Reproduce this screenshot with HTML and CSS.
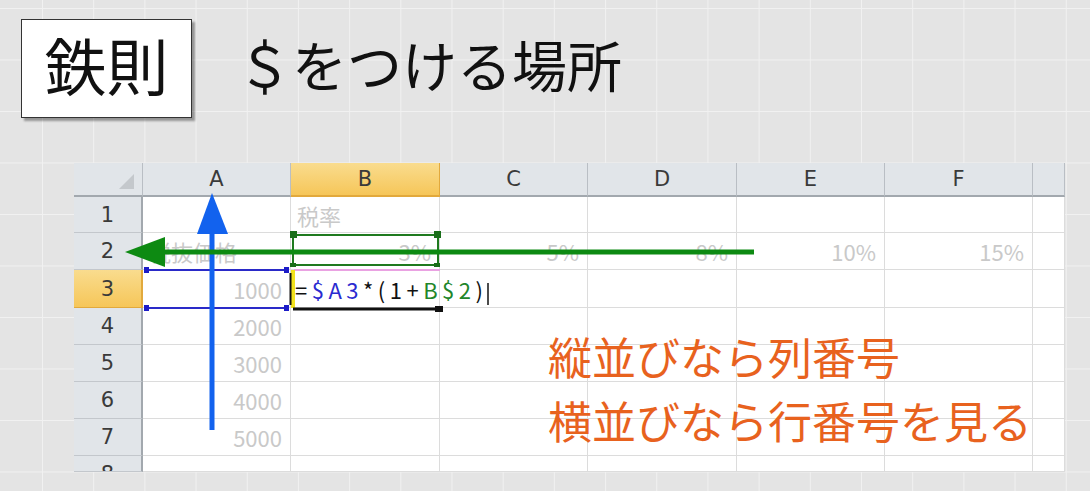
FILE: index.html
```html
<!DOCTYPE html>
<html lang="ja">
  <head>
    <meta charset="UTF-8" />
    <title>鉄則 ＄をつける場所</title>
    <link rel="stylesheet" href="styles.css">
  </head>
  <body>
    <div class="slide">
      <div class="slide-head">
        <div class="rule-box">鉄則</div>
        <h1 class="slide-title">＄をつける場所</h1>
      </div>

      <div class="sheet">
        <div class="sheet-grid">
          <!-- 見出し行 -->
          <div class="hd corner"><span class="corner-mark"></span></div>
          <div class="hd col">A</div>
          <div class="hd col active">B</div>
          <div class="hd col">C</div>
          <div class="hd col">D</div>
          <div class="hd col">E</div>
          <div class="hd col">F</div>
          <div class="hd col"></div>

          <div class="hd row">1</div>
          <div class="cell"></div>
          <div class="cell">税率</div>
          <div class="cell"></div>
          <div class="cell"></div>
          <div class="cell"></div>
          <div class="cell"></div>
          <div class="cell"></div>

          <div class="hd row">2</div>
          <div class="cell">税抜価格</div>
          <div class="cell num">3%</div>
          <div class="cell num">5%</div>
          <div class="cell num">8%</div>
          <div class="cell num">10%</div>
          <div class="cell num">15%</div>
          <div class="cell"></div>

          <div class="hd row active">3</div>
          <div class="cell num">1000</div>
          <div class="cell formula">=<span class="ref-a">$A3</span>*(1+<span class="ref-b">B$2</span>)</div>
          <div class="cell"></div>
          <div class="cell"></div>
          <div class="cell"></div>
          <div class="cell"></div>
          <div class="cell"></div>

          <div class="hd row">4</div>
          <div class="cell num">2000</div>
          <div class="cell"></div>
          <div class="cell"></div>
          <div class="cell"></div>
          <div class="cell"></div>
          <div class="cell"></div>
          <div class="cell"></div>

          <div class="hd row">5</div>
          <div class="cell num">3000</div>
          <div class="cell"></div>
          <div class="cell"></div>
          <div class="cell"></div>
          <div class="cell"></div>
          <div class="cell"></div>
          <div class="cell"></div>

          <div class="hd row">6</div>
          <div class="cell num">4000</div>
          <div class="cell"></div>
          <div class="cell"></div>
          <div class="cell"></div>
          <div class="cell"></div>
          <div class="cell"></div>
          <div class="cell"></div>

          <div class="hd row">7</div>
          <div class="cell num">5000</div>
          <div class="cell"></div>
          <div class="cell"></div>
          <div class="cell"></div>
          <div class="cell"></div>
          <div class="cell"></div>
          <div class="cell"></div>

          <div class="hd row last">8</div>
          <div class="cell"></div>
          <div class="cell"></div>
          <div class="cell"></div>
          <div class="cell"></div>
          <div class="cell"></div>
          <div class="cell"></div>
          <div class="cell"></div>
        </div>

        <!-- 選択枠と矢印 -->
        <svg class="sheet-marks" width="991" height="309" viewBox="0 0 991 309">
          <!-- B2 参照枠 -->
          <rect x="219" y="72" width="145" height="30" fill="none" stroke="#1f7a1f" stroke-width="2" />
          <rect x="216" y="68" width="7" height="7" fill="#1a6e1a" />
          <rect x="360" y="68" width="7" height="7" fill="#1a6e1a" />
          <rect x="216" y="100" width="6" height="4" fill="#1a6e1a" />
          <rect x="360" y="100" width="6" height="4" fill="#1a6e1a" />
          <line x1="220" y1="107" x2="366" y2="107" stroke="#eaa2e2" stroke-width="2" />

          <!-- A3 参照枠 -->
          <line x1="72" y1="107" x2="214" y2="107" stroke="#2a2ac8" stroke-width="2" />
          <line x1="72" y1="145" x2="214" y2="145" stroke="#2a2ac8" stroke-width="2" />
          <rect x="70" y="104" width="5" height="6" fill="#1c1cc8" />
          <rect x="210" y="104" width="5" height="6" fill="#1c1cc8" />
          <rect x="70" y="142" width="5" height="6" fill="#1c1cc8" />
          <rect x="210" y="142" width="5" height="6" fill="#1c1cc8" />

          <!-- B3 編集中 -->
          <rect x="217" y="107" width="4" height="38" fill="#f2e21c" />
          <line x1="216.5" y1="110" x2="216.5" y2="142" stroke="#111" stroke-width="2" />
          <line x1="219" y1="146" x2="362" y2="146" stroke="#111" stroke-width="3" />
          <rect x="361" y="143" width="8" height="6" fill="#111" />
          <line x1="414" y1="120" x2="414" y2="142" stroke="#111" stroke-width="1.5" />

          <!-- 縦の矢印 -->
          <line x1="138" y1="68" x2="138" y2="267" stroke="#1262ee" stroke-width="5" />
          <polygon points="138,30 123,71 154,71" fill="#1262ee" />

          <!-- 横の矢印 -->
          <line x1="88" y1="89" x2="680" y2="89" stroke="#0d8a12" stroke-width="5" />
          <polygon points="51,89 91,74 91,104" fill="#0d8a12" />
        </svg>

        <div class="note">
          <p>縦並びなら列番号</p>
          <p>横並びなら行番号を見る</p>
        </div>
      </div>
    </div>
  </body>
</html>
```

FILE: styles.css
```css
body {
  margin: 0;
  padding: 0;
  font-family: "Noto Sans CJK JP", "Noto Sans", sans-serif;
}

.slide {
  width: 1090px;
  height: 491px;
  overflow: hidden;
  background-color: #e4e4e4;
  background-image:
    linear-gradient(to right, #f1f1f1 1px, transparent 1px),
    linear-gradient(to bottom, #f1f1f1 1px, transparent 1px);
  background-size: 51.2px 51.5px;
  background-position: 42px 8px;
}

.slide-head {
  display: flex;
  align-items: center;
  gap: 45px;
  padding: 19px 0 0 21px;
}

.rule-box {
  width: 171px;
  height: 99px;
  box-sizing: border-box;
  display: flex;
  align-items: center;
  justify-content: center;
  padding-bottom: 10px;
  background: #fff;
  border: 1px solid #333;
  box-shadow: 3px 3px 2px rgba(0, 0, 0, 0.35);
  font-size: 62px;
  line-height: 1;
  color: #111;
}

.slide-title {
  margin: 0 0 10px 0;
  font-size: 55px;
  font-weight: normal;
  line-height: 1;
  color: #111;
}

/* シート */
.sheet {
  position: relative;
  margin: 45px 0 0 74px;
  width: 991px;
  height: 309px;
  overflow: hidden;
  background: #fff;
}

.sheet-grid {
  display: grid;
  grid-template-columns: 69px 148px 149px 148px 149px 148px 148px 32px;
  grid-template-rows: 34px 36px 37px 38px 37px 37px 37px 37px 16px;
}

.hd {
  box-sizing: border-box;
  display: flex;
  align-items: center;
  justify-content: center;
  background: #e1e5e9;
  color: #3a3a3a;
  font-family: "DejaVu Sans", sans-serif;
  font-size: 21px;
}

.hd.col {
  border-right: 1px solid #b9bec4;
  border-bottom: 2px solid #a2a8ae;
}

.hd.row {
  border-right: 2px solid #a2a8ae;
  border-bottom: 1px solid #c3c7cc;
}

.hd.row.last {
  align-items: flex-start;
  padding-top: 8px;
  overflow: hidden;
  line-height: 1;
}

.hd.corner {
  position: relative;
  border-right: 1px solid #b9bec4;
  border-bottom: 2px solid #a2a8ae;
}

.corner-mark {
  position: absolute;
  right: 8px;
  bottom: 6px;
  width: 0;
  height: 0;
  border-left: 15px solid transparent;
  border-bottom: 15px solid #c4c8cc;
}

.hd.active {
  background: linear-gradient(#f9dc8e, #f6c659);
  border-color: #e2a93c;
}

.cell {
  box-sizing: border-box;
  display: flex;
  align-items: center;
  padding: 0 6px;
  border-right: 1px solid #dcdcdc;
  border-bottom: 1px solid #dcdcdc;
  color: #c9c9c9;
  font-size: 22px;
  white-space: nowrap;
  overflow: hidden;
}

.cell.num {
  justify-content: flex-end;
  padding-right: 8px;
}

.cell.formula {
  padding-left: 4px;
  color: #111;
  letter-spacing: 4.5px;
  overflow: visible;
}

.ref-a {
  color: #2a2ad0;
}

.ref-b {
  color: #22862a;
}

.sheet-marks {
  position: absolute;
  left: 0;
  top: 0;
  pointer-events: none;
}

.note {
  position: absolute;
  left: 474px;
  top: 161px;
  color: #e8621e;
  font-size: 44px;
  line-height: 64px;
}

.note p {
  margin: 0;
}
```
